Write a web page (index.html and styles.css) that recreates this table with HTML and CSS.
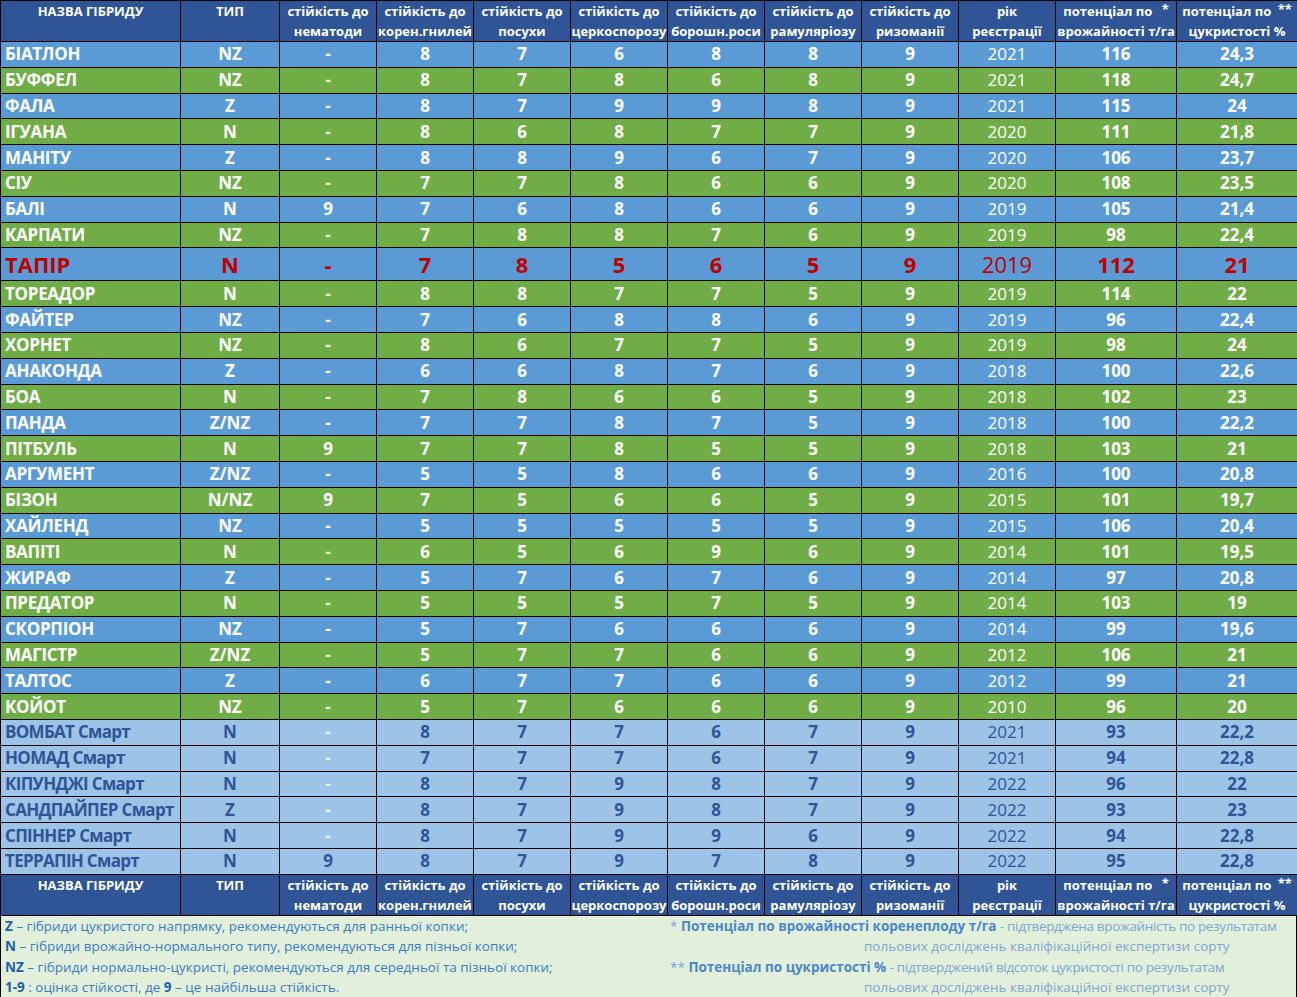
FILE: index.html
```html
<!DOCTYPE html>
<html lang="uk">
<head>
<meta charset="utf-8">
<title>Гібриди цукрового буряка</title>
<link rel="stylesheet" href="styles.css">
</head>
<body>
<table class="grid">
<colgroup>
<col class="c-name"><col class="c-type"><col class="c-9"><col class="c-9"><col class="c-9"><col class="c-9"><col class="c-9"><col class="c-9"><col class="c-9"><col class="c-9"><col class="c-pot"><col class="c-sug">
</colgroup>
<thead>
<tr class="hd">
<th>НАЗВА ГІБРИДУ<br>&nbsp;</th><th>ТИП<br>&nbsp;</th><th>стійкість до<br>нематоди</th><th>стійкість до<br>корен.гнилей</th><th>стійкість до<br>посухи</th><th>стійкість до<br>церкоспорозу</th><th>стійкість до<br>борошн.роси</th><th>стійкість до<br>рамуляріозу</th><th>стійкість до<br>ризоманії</th><th>рік<br>реєстрації</th><th>потенціал по <span class="ast">*</span><br>врожайності т/га</th><th>потенціал по <span class="ast2">**</span><br>цукристості %</th>
</tr>
</thead>
<tbody>
<tr class="b"><td class="n">БІАТЛОН</td><td>NZ</td><td class="d">-</td><td>8</td><td>7</td><td>6</td><td>8</td><td>8</td><td>9</td><td class="y">2021</td><td>116</td><td>24,3</td></tr>
<tr class="g"><td class="n">БУФФЕЛ</td><td>NZ</td><td class="d">-</td><td>8</td><td>7</td><td>8</td><td>6</td><td>8</td><td>9</td><td class="y">2021</td><td>118</td><td>24,7</td></tr>
<tr class="b"><td class="n">ФАЛА</td><td>Z</td><td class="d">-</td><td>8</td><td>7</td><td>9</td><td>9</td><td>8</td><td>9</td><td class="y">2021</td><td>115</td><td>24</td></tr>
<tr class="g"><td class="n">ІГУАНА</td><td>N</td><td class="d">-</td><td>8</td><td>6</td><td>8</td><td>7</td><td>7</td><td>9</td><td class="y">2020</td><td>111</td><td>21,8</td></tr>
<tr class="b"><td class="n">МАНІТУ</td><td>Z</td><td class="d">-</td><td>8</td><td>8</td><td>9</td><td>6</td><td>7</td><td>9</td><td class="y">2020</td><td>106</td><td>23,7</td></tr>
<tr class="g"><td class="n">СІУ</td><td>NZ</td><td class="d">-</td><td>7</td><td>7</td><td>8</td><td>6</td><td>6</td><td>9</td><td class="y">2020</td><td>108</td><td>23,5</td></tr>
<tr class="b"><td class="n">БАЛІ</td><td>N</td><td>9</td><td>7</td><td>6</td><td>8</td><td>6</td><td>6</td><td>9</td><td class="y">2019</td><td>105</td><td>21,4</td></tr>
<tr class="g"><td class="n">КАРПАТИ</td><td>NZ</td><td class="d">-</td><td>7</td><td>8</td><td>8</td><td>7</td><td>6</td><td>9</td><td class="y">2019</td><td>98</td><td>22,4</td></tr>
<tr class="b t"><td class="n">ТАПІР</td><td>N</td><td class="d">-</td><td>7</td><td>8</td><td>5</td><td>6</td><td>5</td><td>9</td><td class="y">2019</td><td>112</td><td>21</td></tr>
<tr class="g"><td class="n">ТОРЕАДОР</td><td>N</td><td class="d">-</td><td>8</td><td>8</td><td>7</td><td>7</td><td>5</td><td>9</td><td class="y">2019</td><td>114</td><td>22</td></tr>
<tr class="b"><td class="n">ФАЙТЕР</td><td>NZ</td><td class="d">-</td><td>7</td><td>6</td><td>8</td><td>8</td><td>6</td><td>9</td><td class="y">2019</td><td>96</td><td>22,4</td></tr>
<tr class="g"><td class="n">ХОРНЕТ</td><td>NZ</td><td class="d">-</td><td>8</td><td>6</td><td>7</td><td>7</td><td>5</td><td>9</td><td class="y">2019</td><td>98</td><td>24</td></tr>
<tr class="b"><td class="n">АНАКОНДА</td><td>Z</td><td class="d">-</td><td>6</td><td>6</td><td>8</td><td>7</td><td>6</td><td>9</td><td class="y">2018</td><td>100</td><td>22,6</td></tr>
<tr class="g"><td class="n">БОА</td><td>N</td><td class="d">-</td><td>7</td><td>8</td><td>6</td><td>6</td><td>5</td><td>9</td><td class="y">2018</td><td>102</td><td>23</td></tr>
<tr class="b"><td class="n">ПАНДА</td><td>Z/NZ</td><td class="d">-</td><td>7</td><td>7</td><td>8</td><td>7</td><td>5</td><td>9</td><td class="y">2018</td><td>100</td><td>22,2</td></tr>
<tr class="g"><td class="n">ПІТБУЛЬ</td><td>N</td><td>9</td><td>7</td><td>7</td><td>8</td><td>5</td><td>5</td><td>9</td><td class="y">2018</td><td>103</td><td>21</td></tr>
<tr class="b"><td class="n">АРГУМЕНТ</td><td>Z/NZ</td><td class="d">-</td><td>5</td><td>5</td><td>8</td><td>6</td><td>6</td><td>9</td><td class="y">2016</td><td>100</td><td>20,8</td></tr>
<tr class="g"><td class="n">БІЗОН</td><td>N/NZ</td><td>9</td><td>7</td><td>5</td><td>6</td><td>6</td><td>5</td><td>9</td><td class="y">2015</td><td>101</td><td>19,7</td></tr>
<tr class="b"><td class="n">ХАЙЛЕНД</td><td>NZ</td><td class="d">-</td><td>5</td><td>5</td><td>5</td><td>5</td><td>5</td><td>9</td><td class="y">2015</td><td>106</td><td>20,4</td></tr>
<tr class="g"><td class="n">ВАПІТІ</td><td>N</td><td class="d">-</td><td>6</td><td>5</td><td>6</td><td>9</td><td>6</td><td>9</td><td class="y">2014</td><td>101</td><td>19,5</td></tr>
<tr class="b"><td class="n">ЖИРАФ</td><td>Z</td><td class="d">-</td><td>5</td><td>7</td><td>6</td><td>7</td><td>6</td><td>9</td><td class="y">2014</td><td>97</td><td>20,8</td></tr>
<tr class="g"><td class="n">ПРЕДАТОР</td><td>N</td><td class="d">-</td><td>5</td><td>5</td><td>5</td><td>7</td><td>5</td><td>9</td><td class="y">2014</td><td>103</td><td>19</td></tr>
<tr class="b"><td class="n">СКОРПІОН</td><td>NZ</td><td class="d">-</td><td>5</td><td>7</td><td>6</td><td>6</td><td>6</td><td>9</td><td class="y">2014</td><td>99</td><td>19,6</td></tr>
<tr class="g"><td class="n">МАГІСТР</td><td>Z/NZ</td><td class="d">-</td><td>5</td><td>7</td><td>7</td><td>6</td><td>6</td><td>9</td><td class="y">2012</td><td>106</td><td>21</td></tr>
<tr class="b"><td class="n">ТАЛТОС</td><td>Z</td><td class="d">-</td><td>6</td><td>7</td><td>7</td><td>6</td><td>6</td><td>9</td><td class="y">2012</td><td>99</td><td>21</td></tr>
<tr class="g"><td class="n">КОЙОТ</td><td>NZ</td><td class="d">-</td><td>5</td><td>7</td><td>6</td><td>6</td><td>6</td><td>9</td><td class="y">2010</td><td>96</td><td>20</td></tr>
<tr class="s"><td class="n">ВОМБАТ Смарт</td><td>N</td><td class="d">-</td><td>8</td><td>7</td><td>7</td><td>6</td><td>7</td><td>9</td><td class="y">2021</td><td>93</td><td>22,2</td></tr>
<tr class="s"><td class="n">НОМАД Смарт</td><td>N</td><td class="d">-</td><td>7</td><td>7</td><td>7</td><td>6</td><td>7</td><td>9</td><td class="y">2021</td><td>94</td><td>22,8</td></tr>
<tr class="s"><td class="n">КІПУНДЖІ Смарт</td><td>N</td><td class="d">-</td><td>8</td><td>7</td><td>9</td><td>8</td><td>7</td><td>9</td><td class="y">2022</td><td>96</td><td>22</td></tr>
<tr class="s"><td class="n">САНДПАЙПЕР Смарт</td><td>Z</td><td class="d">-</td><td>8</td><td>7</td><td>9</td><td>8</td><td>7</td><td>9</td><td class="y">2022</td><td>93</td><td>23</td></tr>
<tr class="s"><td class="n">СПІННЕР Смарт</td><td>N</td><td class="d">-</td><td>8</td><td>7</td><td>9</td><td>9</td><td>6</td><td>9</td><td class="y">2022</td><td>94</td><td>22,8</td></tr>
<tr class="s"><td class="n">ТЕРРАПІН Смарт</td><td>N</td><td>9</td><td>8</td><td>7</td><td>9</td><td>7</td><td>8</td><td>9</td><td class="y">2022</td><td>95</td><td>22,8</td></tr>
</tbody>
<tfoot>
<tr class="hd">
<th>НАЗВА ГІБРИДУ<br>&nbsp;</th><th>ТИП<br>&nbsp;</th><th>стійкість до<br>нематоди</th><th>стійкість до<br>корен.гнилей</th><th>стійкість до<br>посухи</th><th>стійкість до<br>церкоспорозу</th><th>стійкість до<br>борошн.роси</th><th>стійкість до<br>рамуляріозу</th><th>стійкість до<br>ризоманії</th><th>рік<br>реєстрації</th><th>потенціал по <span class="ast">*</span><br>врожайності т/га</th><th>потенціал по <span class="ast2">**</span><br>цукристості %</th>
</tr>
</tfoot>
</table>
<div class="notes">
  <div class="notes-left">
    <p><b>Z</b> – гібриди цукристого напрямку, рекомендуються для ранньої копки;</p>
    <p><b>N</b> – гібриди врожайно-нормального типу, рекомендуються для пізньої копки;</p>
    <p><b>NZ</b> – гібриди нормально-цукристі, рекомендуються для середньої та пізньої копки;</p>
    <p><b>1-9</b> : оцінка стійкості, де <b>9</b> – це найбільша стійкість.</p>
  </div>
  <div class="notes-right">
    <p><span class="star">*</span> <b>Потенціал по врожайності коренеплоду т/га</b> <span class="tight">- підтверджена врожайність по результатам</span></p>
    <p class="indent">польових досліджень кваліфікаційної експертизи сорту</p>
    <p><span class="star">**</span> <b>Потенціал по цукристості %</b> <span class="tight">- підтверджений відсоток цукристості по результатам</span></p>
    <p class="indent">польових досліджень кваліфікаційної експертизи сорту</p>
  </div>
</div>
</body>
</html>
```
FILE: styles.css
```css
body {
  margin: 0;
  width: 1297px;
  font-family: "Open Sans", "Liberation Sans", sans-serif;
  background: #ffffff;
}

.grid {
  border-collapse: collapse;
  table-layout: fixed;
  width: 1297px;
}

.c-name { width: 180px; }
.c-type { width: 99px; }
.c-9 { width: 97px; }
.c-pot { width: 121px; }
.c-sug { width: 121px; }

.grid td,
.grid th {
  border: 1px solid #000;
  padding: 0;
  text-align: center;
  white-space: nowrap;
  overflow: hidden;
}

.hd th {
  background: #2F5597;
  color: #ffffff;
  font-size: 13px;
  font-weight: bold;
  line-height: 20px;
  height: 40px;
  vertical-align: top;
}

.ast {
  margin-left: 6px;
  position: relative;
  top: -2px;
}

.ast2 {
  margin-left: 3px;
  position: relative;
  top: -2px;
}

.grid tbody tr {
  height: 25.8px;
}

.grid tbody td {
  font-size: 17px;
  font-weight: bold;
  color: #ffffff;
  line-height: 20px;
}

.grid tbody td.n {
  text-align: left;
  padding-left: 4px;
  letter-spacing: -0.3px;
}

.grid tbody tr.s td.n {
  letter-spacing: -0.7px;
}

.grid tbody td.y {
  font-weight: normal;
}

.grid tbody td.d {
  color: #FFF7D6;
}

tr.b td { background: #5B9BD5; }
tr.g td { background: #70AD47; }
tr.s td { background: #9DC3E6; color: #2F5597; }
.grid tbody tr.s td.d { color: #EEF0D2; }

.grid tbody tr.t {
  height: 33px;
}

.grid tbody tr.t td {
  color: #C00000;
  font-size: 22px;
}

.grid tbody tr.t td.n {
  letter-spacing: 0;
}

.grid tbody tr.t td.d { color: #C00000; }

.notes {
  display: grid;
  grid-template-columns: 668px 1fr;
  background: #E2EFDA;
  border: 1px solid #000;
  border-top: none;
  height: 82px;
}

.notes p {
  margin: 0;
  font-size: 13.5px;
  line-height: 20.5px;
  white-space: nowrap;
}

.notes-left {
  padding-left: 4px;
  color: #3B7DC4;
}

.notes-left b {
  color: #1F5FAA;
}

.notes-right {
  padding-left: 1px;
  color: #7FA7D3;
}

.notes-right b {
  color: #4A86C8;
}

.notes-right .star {
  color: #6FA3D8;
}

.notes-right .tight {
  letter-spacing: -0.35px;
}

.notes-right .indent {
  padding-left: 194px;
}
```
